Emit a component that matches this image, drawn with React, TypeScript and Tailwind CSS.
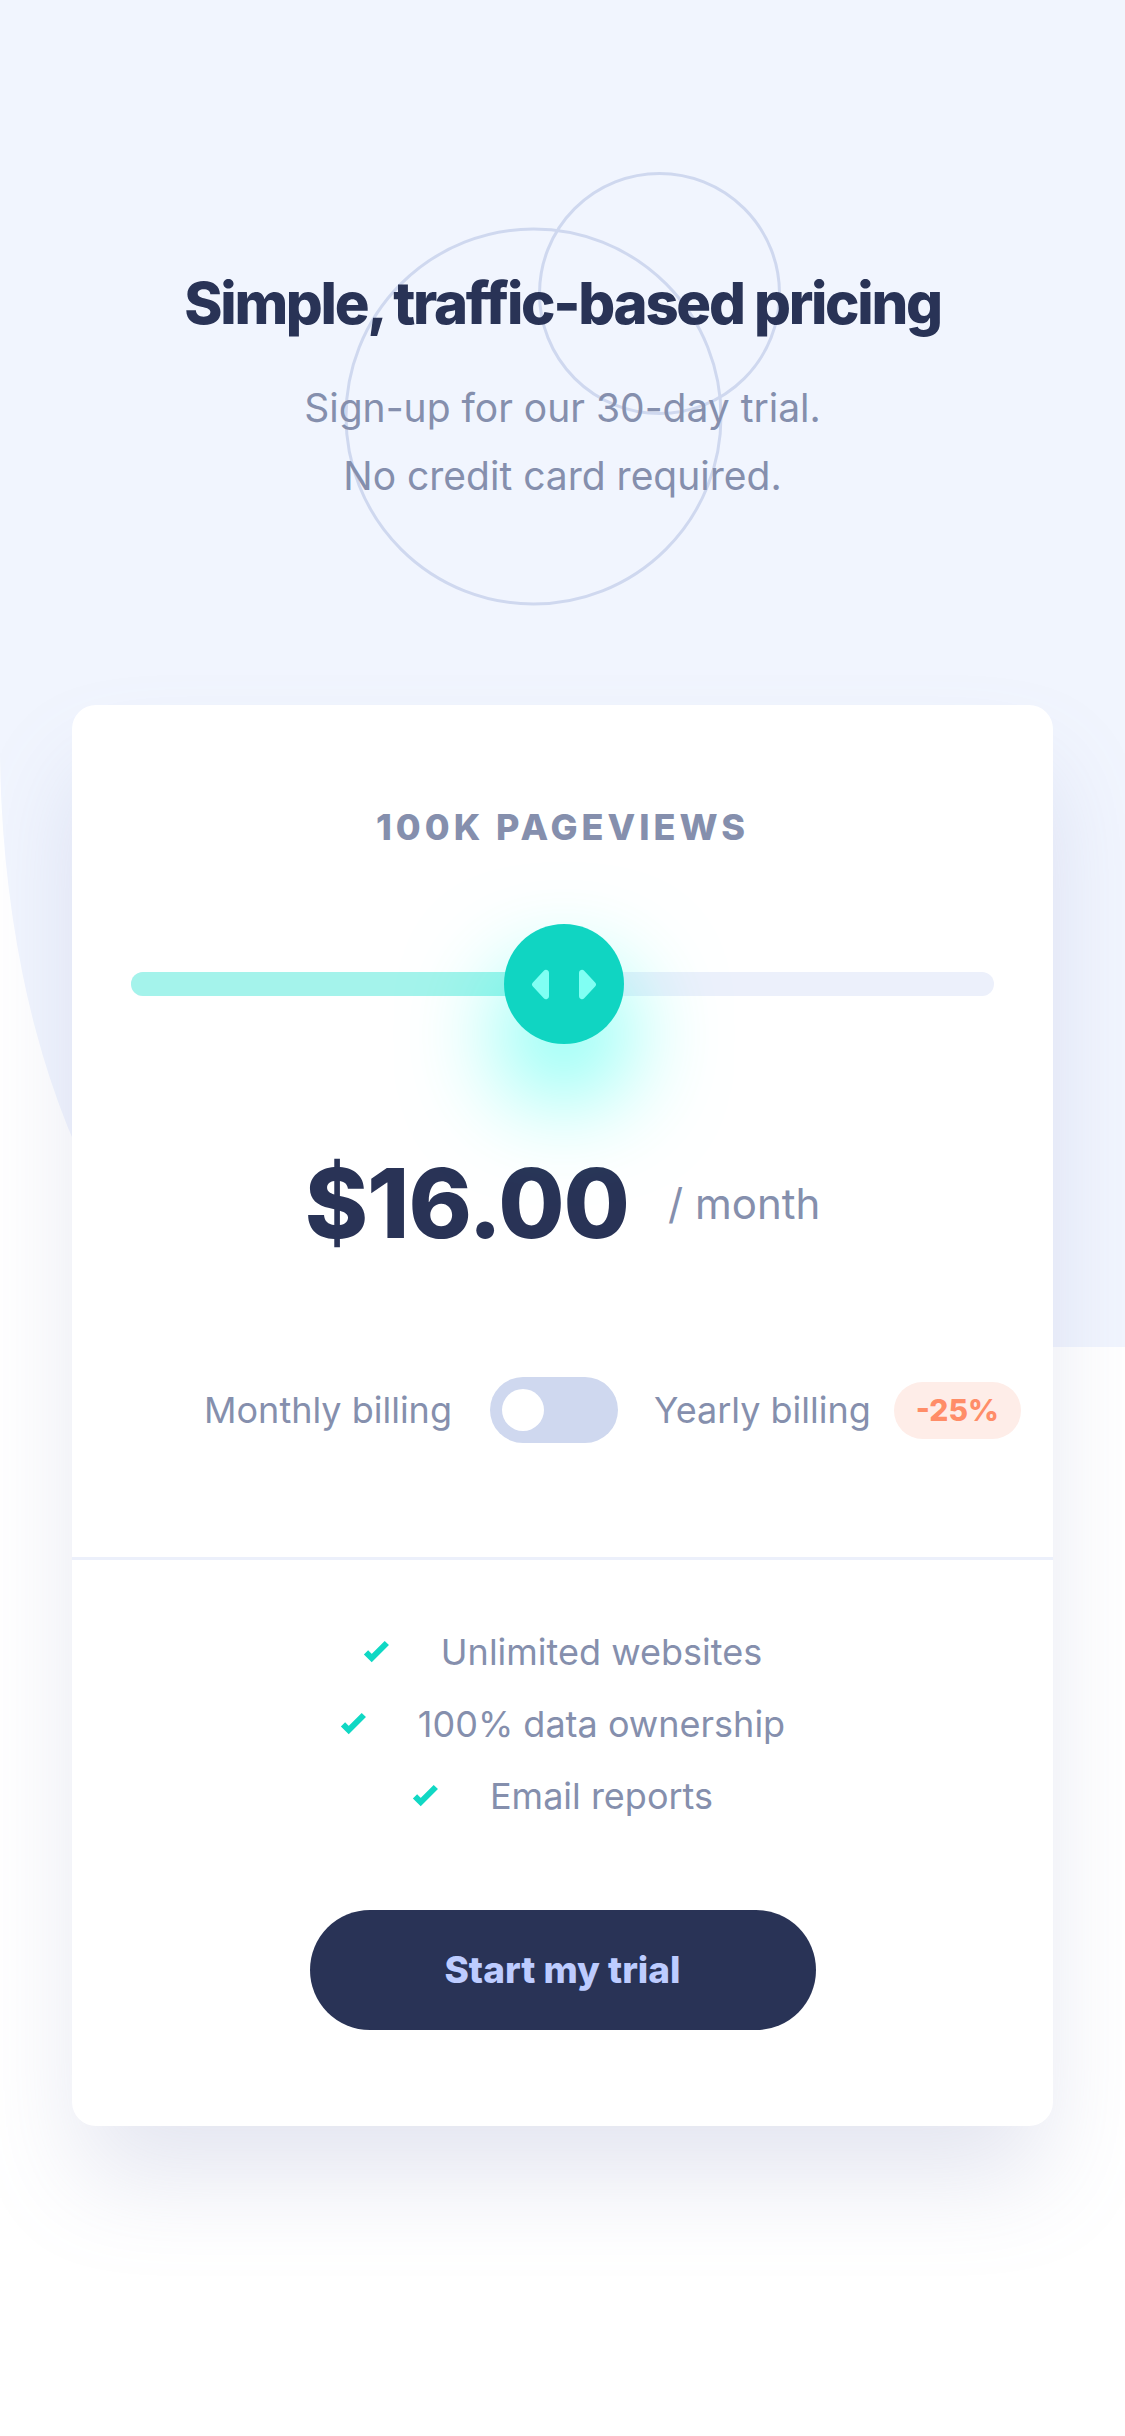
import React from 'react'

const features = ['Unlimited websites', '100% data ownership', 'Email reports']

function CheckIcon() {
  return (
    <svg width="27" height="24" viewBox="0 0 9 8" className="shrink-0">
      <path fill="none" stroke="#10D8C4" strokeWidth="2" d="M1 4.134l1.907 1.908L7.938 1" />
    </svg>
  )
}

function SliderIcon() {
  return (
    <svg width="66" height="39" viewBox="0 0 22 13">
      <path
        fill="#80FFF3"
        fillRule="evenodd"
        d="M16 2.558v7.884a1 1 0 001.735.679l3.639-3.943a1 1 0 000-1.356l-3.64-3.943A1 1 0 0016 2.558zM6 2.558v7.884a1 1 0 01-1.735.679L.626 7.179a1 1 0 010-1.356l3.64-3.943A1 1 0 016 2.558z"
      />
    </svg>
  )
}

function Circles() {
  return (
    <svg
      width="438"
      height="435"
      viewBox="0 0 438 435"
      className="pointer-events-none absolute left-[343px] top-[172px]"
    >
      <g fill="none" stroke="#CFD8EF" strokeWidth="3">
        <circle cx="190.5" cy="244.5" r="187.5" />
        <circle cx="316.5" cy="121.5" r="120" />
      </g>
    </svg>
  )
}

export default function App() {
  return (
    <div className="relative min-h-[2436px] w-full overflow-hidden bg-white font-['Inter',sans-serif]">
      {/* background shape */}
      <div className="absolute left-0 top-0 h-[1347px] w-full rounded-bl-[297px_604px] bg-[#f1f5fe]" />
      <Circles />

      <div className="relative flex flex-col items-center">
        <header className="flex flex-col items-center pt-[267px] text-center">
          <h1 className="text-[58px] font-extrabold leading-[72px] tracking-[-2.3px] text-[#293356]">
            Simple, traffic-based pricing
          </h1>
          <p className="mt-[35px] text-[39px] leading-[68px] text-[#858fad]">
            Sign-up for our 30-day trial.
            <br />
            No credit card required.
          </p>
        </header>

        <main className="mt-[195px] w-[981px] rounded-[24px] bg-white shadow-[0_60px_100px_-10px_rgba(127,137,185,0.22)]">
          <section className="flex flex-col items-center pb-[114px] pt-[100px]">
            <h2 className="text-[36px] font-extrabold leading-[44px] tracking-[4px] text-[#858fad]">
              100K PAGEVIEWS
            </h2>

            <div className="mt-[75px] flex h-[120px] w-full items-center px-[59px]">
              <div className="relative h-[24px] w-full rounded-full bg-[#ecf0fb]">
                <div className="h-full w-[433px] rounded-full bg-[#a4f3eb]" />
                <button className="absolute left-[433px] top-1/2 flex h-[120px] w-[120px] -translate-x-1/2 -translate-y-1/2 items-center justify-center rounded-full bg-[#10d5c2] shadow-[0_50px_100px_rgba(0,255,231,0.6)]">
                  <SliderIcon />
                </button>
              </div>
            </div>

            <div className="mt-[111px] flex items-center gap-[39px]">
              <span className="text-[96px] font-extrabold leading-[96px] tracking-[-1px] text-[#293356]">
                $16.00
              </span>
              <span className="pt-[2px] text-[42px] leading-[42px] text-[#858fad]">/ month</span>
            </div>

            <div className="mt-[126px] flex w-full items-center pl-[132px] text-[36px] text-[#858fad]">
              <span>Monthly billing</span>
              <div className="ml-[38px] flex h-[66px] w-[128px] items-center rounded-full bg-[#cfd8ef] px-[12px]">
                <div className="h-[42px] w-[42px] rounded-full bg-white" />
              </div>
              <span className="ml-[36px]">Yearly billing</span>
              <span className="ml-[23px] flex h-[57px] w-[127px] items-center justify-center rounded-full bg-[#feede8] text-[30px] font-extrabold text-[#ff8d68]">
                -25%
              </span>
            </div>
          </section>

          <section className="flex flex-col items-center border-t-[3px] border-[#ecf0fb] pb-[96px] pt-[56px]">
            <ul className="flex flex-col items-center">
              {features.map((f) => (
                <li key={f} className="flex items-center gap-[51px] text-[36px] leading-[72px] text-[#858fad]">
                  <CheckIcon />
                  <span>{f}</span>
                </li>
              ))}
            </ul>
            <button className="mt-[78px] h-[120px] w-[506px] rounded-full bg-[#293356] text-[37px] font-extrabold text-[#bdccff]">
              Start my trial
            </button>
          </section>
        </main>
      </div>
    </div>
  )
}
